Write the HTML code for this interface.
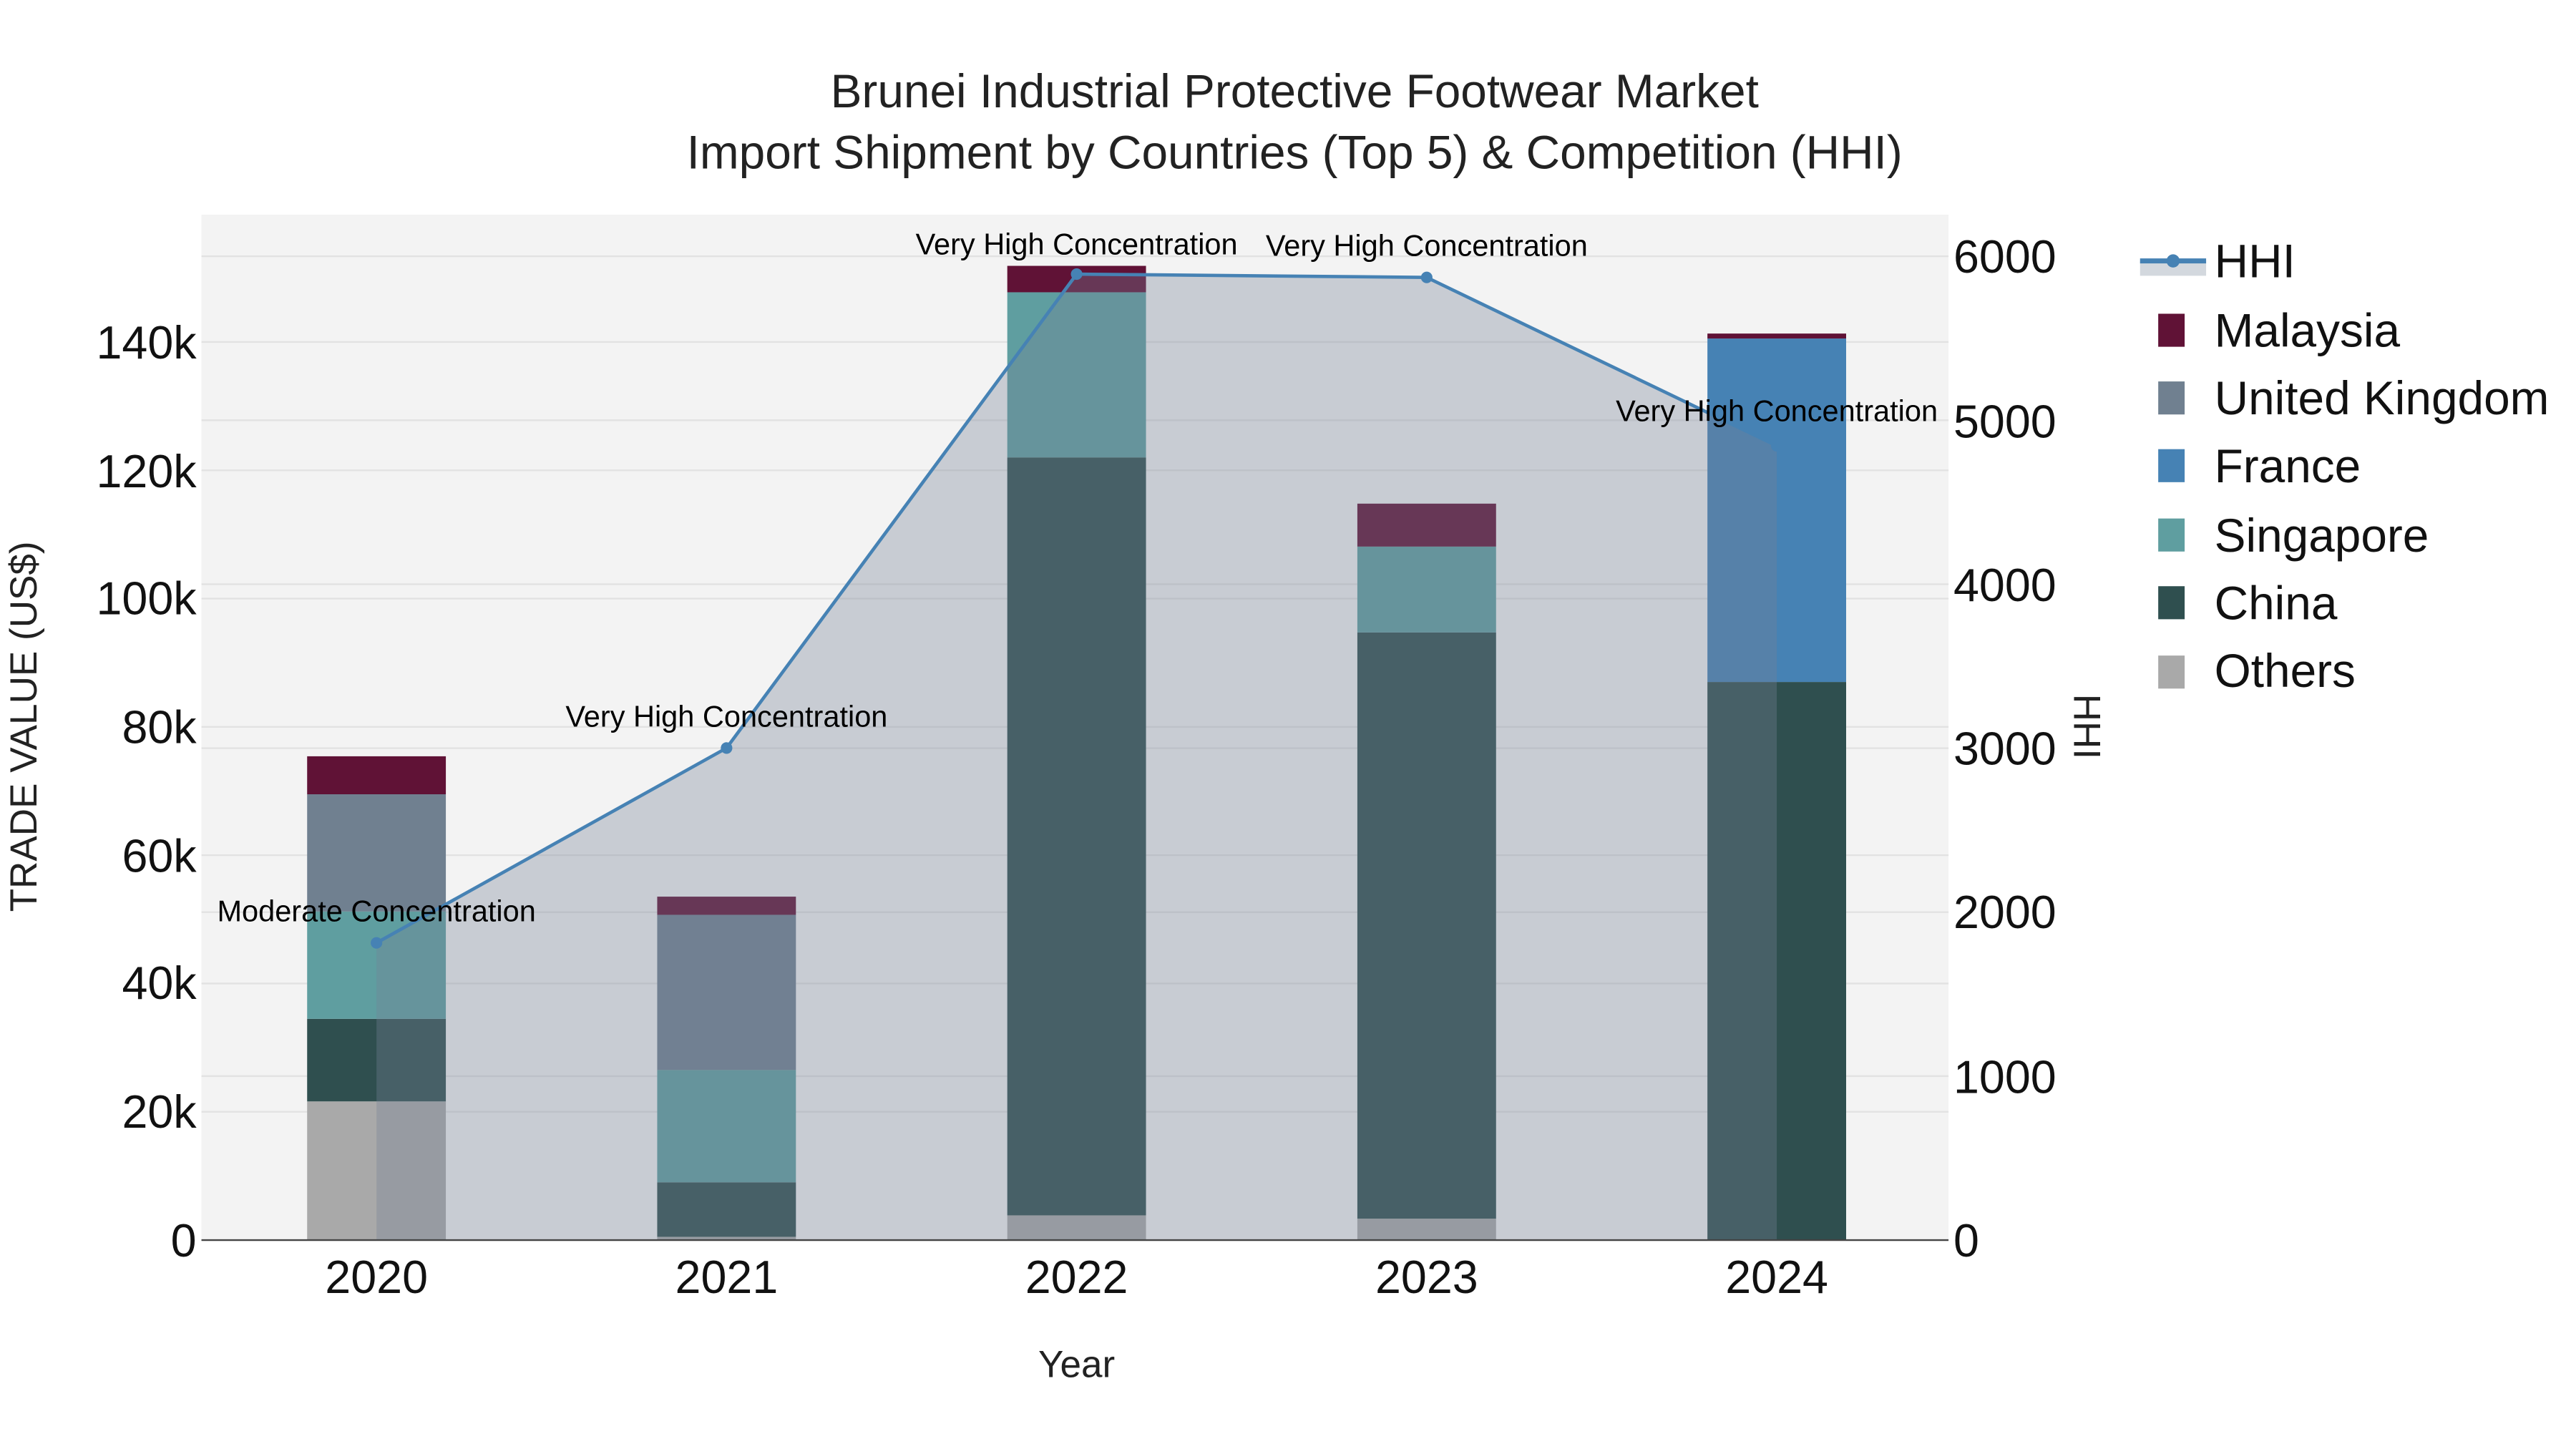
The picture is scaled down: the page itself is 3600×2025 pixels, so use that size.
<!DOCTYPE html>
<html><head><meta charset="utf-8"><style>html,body{margin:0;padding:0;background:#fff}svg{display:block}</style></head><body>
<svg width="3600" height="2025" viewBox="0 0 1560 877.5" xmlns="http://www.w3.org/2000/svg" font-family="Liberation Sans, sans-serif">
<rect x="0" y="0" width="1560" height="877.5" fill="#fff"/>
<rect x="122" y="130" width="1058" height="621" fill="#f3f3f3"/>
<g stroke="#e2e2e2" stroke-width="1">
<line x1="122" x2="1180" y1="673.3" y2="673.3"/><line x1="122" x2="1180" y1="595.6" y2="595.6"/><line x1="122" x2="1180" y1="517.9" y2="517.9"/><line x1="122" x2="1180" y1="440.2" y2="440.2"/><line x1="122" x2="1180" y1="362.5" y2="362.5"/><line x1="122" x2="1180" y1="284.8" y2="284.8"/><line x1="122" x2="1180" y1="207.1" y2="207.1"/>
<line x1="122" x2="1180" y1="651.7" y2="651.7"/><line x1="122" x2="1180" y1="552.4" y2="552.4"/><line x1="122" x2="1180" y1="453.1" y2="453.1"/><line x1="122" x2="1180" y1="353.8" y2="353.8"/><line x1="122" x2="1180" y1="254.5" y2="254.5"/><line x1="122" x2="1180" y1="155.2" y2="155.2"/>
</g>
<g>
<rect x="186" y="667" width="84" height="84" fill="#a9a9a9"/>
<rect x="186" y="617" width="84" height="50" fill="#2f4f4f"/>
<rect x="186" y="552" width="84" height="65" fill="#5f9ea0"/>
<rect x="186" y="481" width="84" height="71" fill="#708090"/>
<rect x="186" y="458" width="84" height="23" fill="#601236"/>

<rect x="398" y="749" width="84" height="2" fill="#a9a9a9"/>
<rect x="398" y="716" width="84" height="33" fill="#2f4f4f"/>
<rect x="398" y="648" width="84" height="68" fill="#5f9ea0"/>
<rect x="398" y="554" width="84" height="94" fill="#708090"/>
<rect x="398" y="543" width="84" height="11" fill="#601236"/>

<rect x="610" y="736" width="84" height="15" fill="#a9a9a9"/>
<rect x="610" y="277" width="84" height="459" fill="#2f4f4f"/>
<rect x="610" y="177" width="84" height="100" fill="#5f9ea0"/>
<rect x="610" y="161" width="84" height="16" fill="#601236"/>

<rect x="822" y="738" width="84" height="13" fill="#a9a9a9"/>
<rect x="822" y="383" width="84" height="355" fill="#2f4f4f"/>
<rect x="822" y="331" width="84" height="52" fill="#5f9ea0"/>
<rect x="822" y="305" width="84" height="26" fill="#601236"/>

<rect x="1034" y="413" width="84" height="338" fill="#2f4f4f"/>
<rect x="1034" y="205" width="84" height="208" fill="#4682b4"/>
<rect x="1034" y="202" width="84" height="3" fill="#601236"/>
</g>
<polygon points="228,751 228,571 440,453 652,166 864,168 1076,270 1076,751" fill="rgb(116,128,149)" fill-opacity="0.34"/>
<polyline points="228,571 440,453 652,166 864,168 1076,270" fill="none" stroke="#4682b4" stroke-width="2"/>
<g fill="#4682b4"><circle cx="228" cy="571" r="3.5"/><circle cx="440" cy="453" r="3.5"/><circle cx="652" cy="166" r="3.5"/><circle cx="864" cy="168" r="3.5"/><circle cx="1076" cy="270" r="3.5"/></g>
<line x1="122" x2="1180" y1="751" y2="751" stroke="#444" stroke-width="1"/>
<g font-size="18" fill="#000" text-anchor="middle">
<text x="228" y="558">Moderate Concentration</text>
<text x="440" y="440">Very High Concentration</text>
<text x="652" y="154">Very High Concentration</text>
<text x="864" y="155">Very High Concentration</text>
<text x="1076" y="255">Very High Concentration</text>
</g>
<g font-size="28" fill="#111" text-anchor="end">
<text x="119" y="761">0</text><text x="119" y="683">20k</text><text x="119" y="605">40k</text><text x="119" y="528">60k</text><text x="119" y="450">80k</text><text x="119" y="372">100k</text><text x="119" y="295">120k</text><text x="119" y="217">140k</text>
</g>
<g font-size="28" fill="#111" text-anchor="start">
<text x="1183" y="761">0</text><text x="1183" y="662">1000</text><text x="1183" y="562">2000</text><text x="1183" y="463">3000</text><text x="1183" y="364">4000</text><text x="1183" y="265">5000</text><text x="1183" y="165">6000</text>
</g>
<g font-size="28" fill="#111" text-anchor="middle">
<text x="228" y="783">2020</text><text x="440" y="783">2021</text><text x="652" y="783">2022</text><text x="864" y="783">2023</text><text x="1076" y="783">2024</text>
</g>
<text x="652" y="834" font-size="23" text-anchor="middle" fill="#222">Year</text>
<text transform="translate(22,440) rotate(-90)" font-size="23" text-anchor="middle" fill="#222">TRADE VALUE (US$)</text>
<text transform="translate(1256,440) rotate(90)" font-size="23" text-anchor="middle" fill="#222">HHI</text>
<text x="784" y="65" font-size="28.5" text-anchor="middle" fill="#222">Brunei Industrial Protective Footwear Market</text>
<text x="784" y="102" font-size="28.5" text-anchor="middle" fill="#222">Import Shipment by Countries (Top 5) &amp; Competition (HHI)</text>
<rect x="1296" y="158" width="40" height="9" fill="#d3d8de"/>
<line x1="1296" x2="1336" y1="158" y2="158" stroke="#4682b4" stroke-width="3"/>
<circle cx="1316" cy="158" r="4" fill="#4682b4"/>
<g font-size="28.5" fill="#111">
<text x="1341" y="168">HHI</text>
<rect x="1307" y="190" width="16" height="20" fill="#601236"/><text x="1341" y="210">Malaysia</text>
<rect x="1307" y="231" width="16" height="20" fill="#708090"/><text x="1341" y="251">United Kingdom</text>
<rect x="1307" y="272" width="16" height="20" fill="#4682b4"/><text x="1341" y="292">France</text>
<rect x="1307" y="314" width="16" height="20" fill="#5f9ea0"/><text x="1341" y="334">Singapore</text>
<rect x="1307" y="355" width="16" height="20" fill="#2f4f4f"/><text x="1341" y="375">China</text>
<rect x="1307" y="397" width="16" height="20" fill="#a9a9a9"/><text x="1341" y="416">Others</text>
</g>
</svg>
</body></html>
